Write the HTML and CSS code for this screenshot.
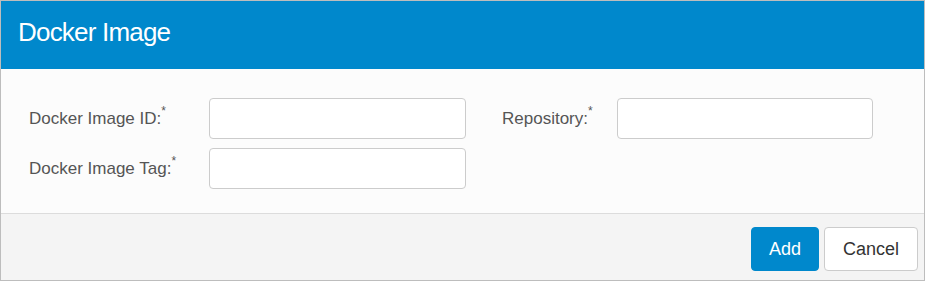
FILE: index.html
```html
<!DOCTYPE html>
<html lang="en">
<head>
    <meta charset="UTF-8">
    <meta name="viewport" content="width=device-width, initial-scale=1.0">
    <title>Docker Image</title>
    <link rel="stylesheet" href="styles.css">
</head>
<body>

    <div class="dialog">
        <div class="dialog__header">
            <h2>Docker Image</h2>
        </div>

        <form class="dialog__body">
            <div class="form-grid">
                <label for="image_id" class="form__label">Docker Image ID:<sup>*</sup></label>
                <input type="text" id="image_id" class="form__input">

                <label for="repository" class="form__label form__label--second">Repository:<sup>*</sup></label>
                <input type="text" id="repository" class="form__input">

                <label for="image_tag" class="form__label">Docker Image Tag:<sup>*</sup></label>
                <input type="text" id="image_tag" class="form__input">
            </div>
        </form>

        <div class="dialog__footer">
            <button type="button" class="btn btn--primary">Add</button>
            <button type="button" class="btn">Cancel</button>
        </div>
    </div>

</body>
</html>
```

FILE: styles.css
```css
* {
    margin: 0;
    padding: 0;
    box-sizing: border-box;
}

body {
    font-family: 'Liberation Sans', Arial, sans-serif;
    background: #fff;
    color: #555;
}

.dialog {
    width: 925px;
    height: 281px;
    border: 1px solid #bdbdbd;
    display: flex;
    flex-direction: column;
    background: #fcfcfc;
}

.dialog__header {
    height: 68px;
    background: #0088cc;
    display: flex;
    align-items: center;
    padding-left: 17px;
    padding-bottom: 5px;
}

h2 {
    color: #fff;
    font-size: 26px;
    font-weight: 400;
    letter-spacing: -0.8px;
}

.dialog__body {
    height: 144px;
    padding: 29px 0 0 28px;
}

.form-grid {
    display: grid;
    grid-template-columns: 180px 257px 151px 256px;
    grid-auto-rows: 41px;
    row-gap: 9px;
    align-items: center;
}

.form__label {
    font-size: 17px;
    color: #555;
    padding-bottom: 2px;
}

.form__label--second {
    padding-left: 36px;
}

.form__label sup {
    font-size: 12px;
    position: relative;
    top: -2px;
}

.form__input {
    height: 41px;
    width: 100%;
    border: 1px solid #ccc;
    border-radius: 4px;
    background: #fff;
    outline: none;
}

.dialog__footer {
    flex: 1;
    background: #f4f4f4;
    border-top: 1px solid #dcdcdc;
    display: flex;
    justify-content: flex-end;
    align-items: flex-start;
    gap: 5px;
    padding: 13px 6px 0 0;
}

.btn {
    height: 44px;
    padding: 0 18px;
    font-family: 'Liberation Sans', Arial, sans-serif;
    font-size: 18px;
    color: #333;
    background: #fff;
    border: 1px solid #ccc;
    border-radius: 4px;
    cursor: pointer;
}

.btn--primary {
    width: 68px;
    padding: 0;
    background: #0088cc;
    border-color: #0088cc;
    color: #fff;
}
```
